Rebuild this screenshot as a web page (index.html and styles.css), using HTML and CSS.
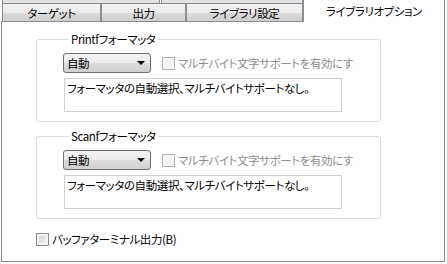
FILE: index.html
```html
<!DOCTYPE html>
<html lang="ja">
<head>
  <meta charset="UTF-8" />
  <title>ライブラリオプション</title>
  <link rel="stylesheet" href="styles.css">
</head>
<body>
  <div class="window">
    <div class="tabbar">
      <div class="tab-rows">
        <div class="back-row">
          <span class="back-tab back-1"></span>
          <span class="back-tab back-2"></span>
        </div>
        <div class="front-row">
          <div class="tab tab-1">ターゲット</div>
          <div class="tab tab-2">出力</div>
          <div class="tab tab-3">ライブラリ設定</div>
        </div>
      </div>
      <div class="tab active">ライブラリオプション</div>
    </div>

    <div class="panel">
      <fieldset class="group">
        <legend>Printfフォーマッタ</legend>
        <div class="row">
          <div class="combo"><span>自動</span><i class="arrow"></i></div>
          <label class="check disabled"><span class="box"></span><span class="check-text">マルチバイト文字サポートを有効にする</span></label>
        </div>
        <div class="memo">フォーマッタの自動選択、マルチバイトサポートなし。</div>
      </fieldset>

      <fieldset class="group">
        <legend>Scanfフォーマッタ</legend>
        <div class="row">
          <div class="combo"><span>自動</span><i class="arrow"></i></div>
          <label class="check disabled"><span class="box"></span><span class="check-text">マルチバイト文字サポートを有効にする</span></label>
        </div>
        <div class="memo">フォーマッタの自動選択、マルチバイトサポートなし。</div>
      </fieldset>

      <label class="check buffer"><span class="box"></span><span class="check-text">バッファターミナル出力(B)</span></label>
    </div>
  </div>
</body>
</html>
```

FILE: styles.css
```css
body {
  margin: 0;
  background: #fff;
  color: #000;
  font-family: "Noto Sans CJK JP", "Noto Sans", sans-serif;
  font-size: 11.5px;
  letter-spacing: -0.4px;
  line-height: 14px;
  font-feature-settings: "palt";
}
.window {
  width: 444px;
  margin-left: 1px;
}
.tabbar {
  display: flex;
  height: 22px;
}
.tab-rows {
  width: 302px;
  display: flex;
  flex-direction: column;
  border-bottom: 1px solid #898c95;
}
.back-row {
  display: flex;
  height: 3px;
}
.back-tab {
  border: 1px solid #898c95;
  border-bottom: none;
  border-top: none;
  background: #e3e3e3;
}
.back-1 {
  width: 157px;
  margin-left: 1px;
}
.back-2 {
  width: 140px;
  margin-left: 1px;
}
.front-row {
  display: flex;
  flex: 1;
}
.tab {
  display: flex;
  align-items: center;
  justify-content: center;
  border: 1px solid #898c95;
  border-bottom: none;
  background: linear-gradient(#f2f2f2, #ebebeb 50%, #dddddd 51%, #cfcfcf);
}
.tab-1 {
  width: 97px;
  margin-left: 1px;
}
.tab-2 {
  width: 83px;
}
.tab-3 {
  flex: 1;
}
.active {
  flex: 1;
  background: #fff;
  border-top: none;
  padding-bottom: 1px;
}
.panel {
  height: 240px;
  box-sizing: border-box;
  border: 1px solid #898c95;
  border-top: none;
  padding: 10px 0 0 34px;
}
.group {
  margin: 0 0 7px 0;
  padding: 0 0 9px 26px;
  width: 345px;
  box-sizing: border-box;
  border: 1px solid #d5dfe5;
  border-radius: 3px;
  min-inline-size: 0;
}
.group legend {
  padding: 0 2px;
  margin-left: 6px;
}
.row {
  display: flex;
  align-items: center;
  margin-top: 7px;
}
.combo {
  width: 88px;
  height: 20px;
  box-sizing: border-box;
  border: 1px solid #707070;
  border-radius: 3px;
  background: linear-gradient(#f2f2f2, #ebebeb 50%, #dddddd 51%, #cfcfcf);
  display: flex;
  align-items: center;
  justify-content: space-between;
  padding: 0 5px 0 3px;
}
.arrow {
  width: 0;
  height: 0;
  border-left: 4px solid transparent;
  border-right: 4px solid transparent;
  border-top: 4px solid #000;
}
.check {
  display: flex;
  align-items: center;
  gap: 3px;
}
.box {
  width: 13px;
  height: 13px;
  box-sizing: border-box;
  border: 1px solid #8e8f8f;
  background: linear-gradient(135deg, #cbcfd5, #f7f7f7);
  box-shadow: inset 0 0 0 2px #f4f4f4;
  flex: none;
}
.disabled {
  width: 192px;
  margin-left: 11px;
  overflow: hidden;
  white-space: nowrap;
  color: #8d8d8d;
}
.disabled .box {
  border-color: #b1b1b1;
  background: #f4f4f4;
  box-shadow: none;
}
.memo {
  width: 278px;
  height: 34px;
  box-sizing: border-box;
  margin: 5px 0 0 1px;
  border: 1px solid #d0d0d0;
  padding: 2px 2px;
}
.buffer {
  margin-top: 13px;
}
```
